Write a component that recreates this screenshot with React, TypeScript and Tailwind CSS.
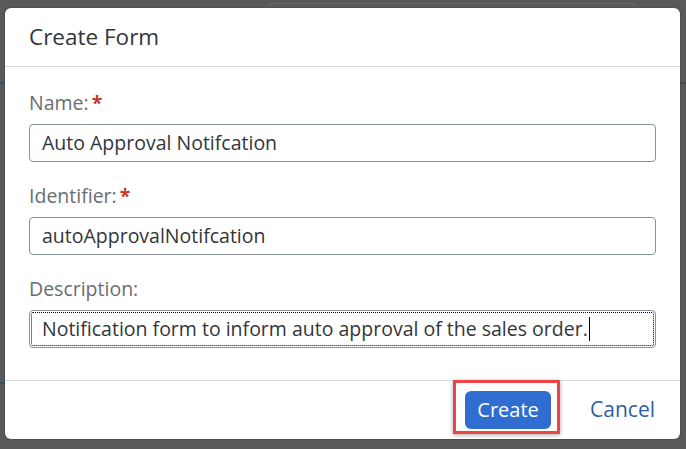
export default function App() {
  const font = { fontFamily: '"Open Sans", "Noto Sans", sans-serif' };
  return (
    <div
      className="relative w-[686px] h-[449px] overflow-hidden bg-[#595959] pt-[8px] pl-[5px]"
      style={font}
    >
      {/* faint background shapes behind the overlay */}
      <div className="absolute left-[266px] top-[3px] w-[372px] h-[20px] rounded-[5px] border border-[#666] bg-[#5c5c5c]" />
      <div className="absolute left-0 top-[82px] w-[8px] h-[2px] bg-[#3d4f6b]" />
      <div className="absolute left-0 top-[382px] w-[8px] h-[2px] bg-[#3d4f6b]" />
      <div className="absolute right-0 top-[82px] w-[8px] h-[2px] bg-[#4a4a4a]" />

      <div className="relative flex flex-col w-[675px] h-[431px] rounded-[6px] bg-white shadow-[0_0_2px_rgba(0,0,0,0.4)]">
        <div className="h-[59px] flex items-center px-[24px] border-b border-[#d9d9d9]">
          <span className="text-[22.5px] text-[#32363a]">Create Form</span>
        </div>

        <div className="flex-1 flex flex-col px-[24px] pt-[23px]">
          <Field label="Name:" required value="Auto Approval Notifcation" />
          <Field label="Identifier:" required value="autoApprovalNotifcation" />
          <Field label="Description:" value="Notification form to inform auto approval of the sales order." focused />
        </div>

        <div className="relative h-[59px] flex items-center justify-end gap-[39px] px-[25px] border-t border-[#d9d9d9]">
          <div className="relative">
            <button className="h-[38px] w-[86px] rounded-[6px] bg-[#2f6dd0] text-white text-[20px]">Create</button>
            <div className="absolute left-[-12px] top-[-11px] w-[107px] h-[54px] border-[3px] border-[#ef4444] shadow-[0_1px_4px_rgba(0,0,0,0.35)]" />
          </div>
          <span className="text-[21px] text-[#2c5ca8]">Cancel</span>
        </div>
      </div>
    </div>
  );
}

function Field({
  label,
  value,
  required,
  focused,
}: {
  label: string;
  value: string;
  required?: boolean;
  focused?: boolean;
}) {
  return (
    <div className="flex flex-col mb-[21px]">
      <div className="h-[26px] flex items-center text-[19.5px] text-[#6a6d70]">
        {label}
        {required && <span className="ml-[3px] text-[#c0392b] font-bold">*</span>}
      </div>
      <div
        className={`mt-[8px] h-[38px] flex items-center px-[12px] rounded-[4px] border border-[#89919a] text-[19.5px] text-[#32363a] ${
          focused ? "outline-1 outline-dotted outline-black -outline-offset-3" : ""
        }`}
      >
        <span>{value}</span>
        {focused && <span className="ml-[1px] w-px h-[24px] bg-black" />}
      </div>
    </div>
  );
}
